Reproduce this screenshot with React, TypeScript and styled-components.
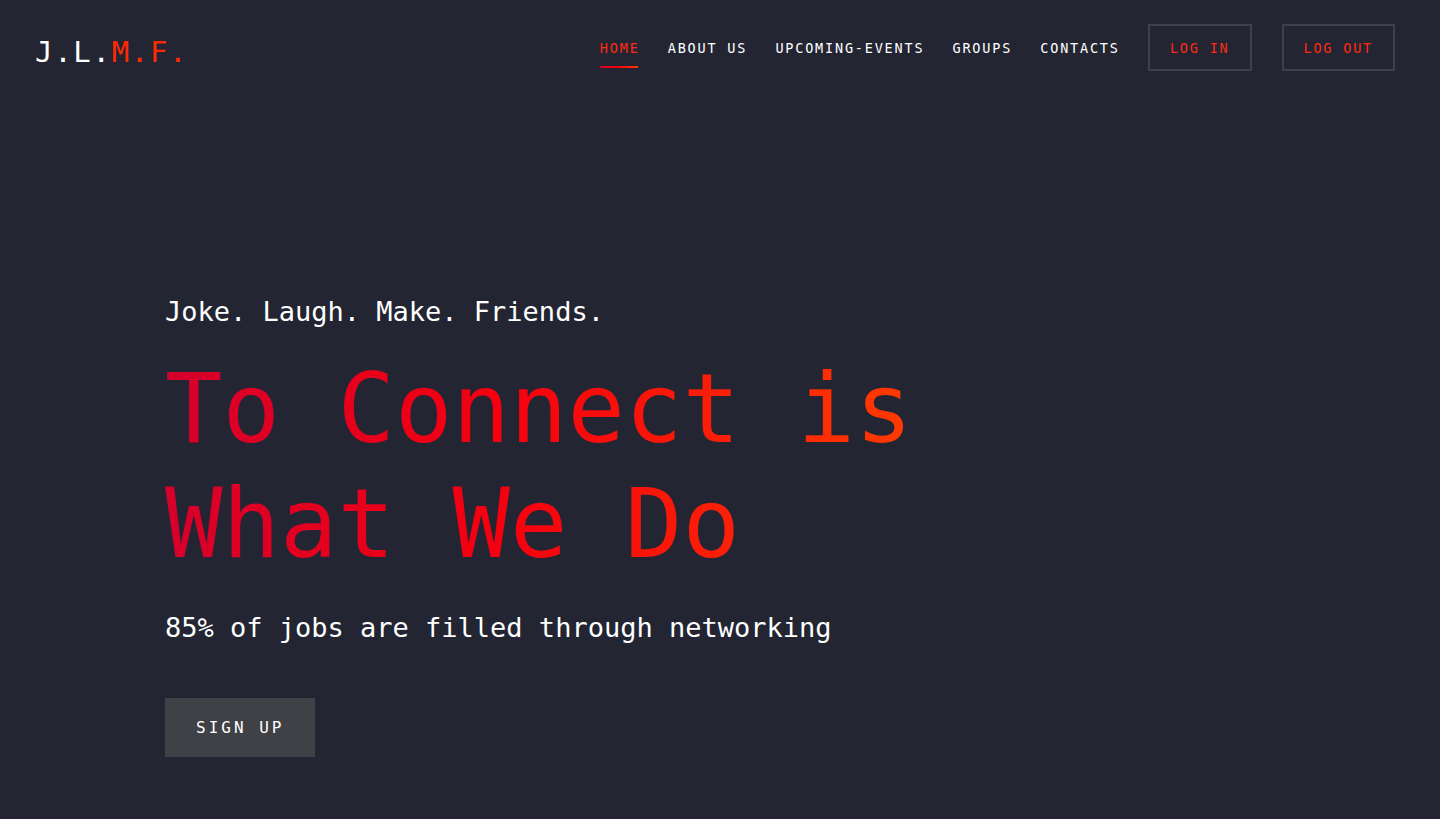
import { FC } from 'react'
import styled, { createGlobalStyle } from 'styled-components'

const GlobalStyle = createGlobalStyle`
  html, body {
    margin: 0;
    padding: 0;
    background: #232533;
  }
  body {
    font-family: 'DejaVu Sans Mono', 'Liberation Mono', monospace;
    color: #ffffff;
  }
  * {
    box-sizing: border-box;
  }
`

const redGradient = 'linear-gradient(90deg, #d5002c 0%, #f5000f 45%, #ff3a00 100%)'

const Page = styled.div`
  min-height: 819px;
  background: #232533;
`

const Header = styled.header`
  display: flex;
  align-items: center;
  justify-content: space-between;
  padding: 24px 45px 0 35px;
`

const Logo = styled.div`
  font-size: 29px;
  letter-spacing: 1.7px;
  margin-top: 8px;
  color: #ffffff;
`

const LogoAccent = styled.span`
  color: #ff2a00;
`

const Nav = styled.nav`
  display: flex;
  align-items: center;
  gap: 30px;
`

const NavLink = styled.a<{ active?: boolean }>`
  position: relative;
  font-size: 13.5px;
  letter-spacing: 1.8px;
  margin-right: -1.8px;
  color: ${(p) => (p.active ? '#ff2a10' : '#ffffff')};
  text-decoration: none;
  cursor: pointer;

  &::after {
    content: '';
    display: ${(p) => (p.active ? 'block' : 'none')};
    position: absolute;
    left: 0;
    right: 1.8px;
    bottom: -12px;
    height: 2px;
    background: ${redGradient};
  }
`

const OutlineButton = styled.button`
  height: 47px;
  padding: 0 20px;
  background: transparent;
  border: 2px solid #3f4049;
  color: #ff2a10;
  font-family: inherit;
  font-size: 13.5px;
  letter-spacing: 1.8px;
  cursor: pointer;
`

const Hero = styled.section`
  padding: 221px 0 0 165px;
`

const Tagline = styled.p`
  margin: 0;
  font-size: 27px;
  line-height: 40px;
  color: #ffffff;
`

const Headline = styled.h1`
  display: inline-block;
  margin: 20px 0 0;
  font-size: 95.5px;
  font-weight: normal;
  line-height: 115px;
  background: ${redGradient};
  -webkit-background-clip: text;
  background-clip: text;
  color: transparent;
`

const Stat = styled.p`
  margin: 26px 0 0;
  font-size: 27px;
  line-height: 40px;
  color: #ffffff;
`

const SignUp = styled.button`
  margin-top: 50px;
  height: 59px;
  padding: 0 31px;
  background: #404147;
  border: none;
  color: #ffffff;
  font-family: inherit;
  font-size: 16px;
  letter-spacing: 3px;
  cursor: pointer;
`

const links = ['HOME', 'ABOUT US', 'UPCOMING-EVENTS', 'GROUPS', 'CONTACTS']

const App: FC = () => {
  return (
    <Page>
      <GlobalStyle />
      <Header>
        <Logo>
          J.L.<LogoAccent>M.F.</LogoAccent>
        </Logo>
        <Nav>
          {links.map((l, i) => (
            <NavLink key={l} active={i === 0}>
              {l}
            </NavLink>
          ))}
          <OutlineButton>LOG IN</OutlineButton>
          <OutlineButton>LOG OUT</OutlineButton>
        </Nav>
      </Header>
      <Hero>
        <Tagline>Joke. Laugh. Make. Friends.</Tagline>
        <Headline>
          To Connect is
          <br />
          What We Do
        </Headline>
        <Stat>85% of jobs are filled through networking</Stat>
        <SignUp>SIGN UP</SignUp>
      </Hero>
    </Page>
  )
}

export default App
